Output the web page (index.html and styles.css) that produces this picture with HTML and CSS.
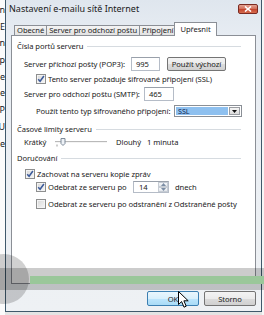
FILE: index.html
```html
<!DOCTYPE html>
<html lang="cs">
<head>
<meta charset="utf-8">
<title>Nastavení e-mailu sítě Internet</title>
<link rel="stylesheet" href="styles.css">
</head>
<body>
<div class="desk">
  <div class="bgstrip">
    <div class="bgline"><span>Jmén</span></div>
    <div class="bgline"><span>E</span></div>
    <div class="bgline"><span>Jmén</span></div>
    <div class="bgline"><span>Typ</span></div>
    <div class="bgline"><span>Se</span></div>
    <div class="bgline"><span>Se</span></div>
    <div class="bgline"><span>P</span></div>
    <div class="bgline"><span>U</span></div>
    <div class="bgline"><span>de</span></div>
  </div>
  <div class="window">
    <div class="titlebar">
      <span class="title">Nastavení e-mailu sítě Internet</span>
      <span class="close"><svg width="8" height="6" viewBox="0 0 8 6"><path d="M1 0.5 L7 5.5 M7 0.5 L1 5.5" stroke="#fff" stroke-width="1.6"/></svg></span>
    </div>
    <div class="client">
      <div class="tabs">
        <div class="tab">Obecné</div>
        <div class="tab">Server pro odchozí poštu</div>
        <div class="tab">Připojení</div>
        <div class="tab sel">Upřesnit</div>
      </div>
      <div class="panel">
        <div class="group r1">Čísla portů serveru</div>
        <div class="row r2">
          <span class="ind1 lbl-pop">Server příchozí pošty (POP3):</span>
          <span class="input w-pop">995</span>
          <span class="btn w-def">Použít výchozí</span>
        </div>
        <div class="row r3">
          <span class="cb ind2"><svg width="8" height="8" viewBox="0 0 8 8"><path d="M1.2 4.2 L3.1 6.3 L6.9 1" fill="none" stroke="#3b5a9a" stroke-width="1.5"/></svg></span>
          <span class="cbtext">Tento server požaduje šifrované připojení (SSL)</span>
        </div>
        <div class="row r4">
          <span class="ind1 lbl-smtp">Server pro odchozí poštu (SMTP):</span>
          <span class="input w-smtp">465</span>
        </div>
        <div class="row r5">
          <span class="ind2 lbl-enc">Použít tento typ šifrovaného připojení:</span>
          <span class="select">
            <span class="selval">SSL</span>
            <span class="dd"><svg width="5" height="3" viewBox="0 0 5 3"><path d="M0 0 H5 L2.5 3 Z" fill="#111"/></svg></span>
          </span>
        </div>
        <div class="group r6">Časové limity serveru</div>
        <div class="row r7">
          <span class="ind1 lbl-short">Krátký</span>
          <span class="slider"><svg width="52" height="10" viewBox="0 0 52 10"><path d="M0 4.5 H52" stroke="#b9b9b9" stroke-width="1"/><path d="M0 5.5 H52" stroke="#f4f4f4" stroke-width="1"/><path d="M2 7.5 V9.5" stroke="#9a9a9a"/><path d="M6 1.5 H10 V6.5 L8 8.5 L6 6.5 Z" fill="#eef2f7" stroke="#7d8a99"/></svg></span>
          <span class="lbl-long">Dlouhý</span>
          <span>1 minuta</span>
        </div>
        <div class="group r8">Doručování</div>
        <div class="row r9">
          <span class="cb ind3"><svg width="8" height="8" viewBox="0 0 8 8"><path d="M1.2 4.2 L3.1 6.3 L6.9 1" fill="none" stroke="#3b5a9a" stroke-width="1.5"/></svg></span>
          <span class="cbtext">Zachovat na serveru kopie zpráv</span>
        </div>
        <div class="row r10">
          <span class="cb ind2"><svg width="8" height="8" viewBox="0 0 8 8"><path d="M1.2 4.2 L3.1 6.3 L6.9 1" fill="none" stroke="#3b5a9a" stroke-width="1.5"/></svg></span>
          <span class="cbtext lbl-del">Odebrat ze serveru po</span>
          <span class="spin">
            <span class="spinval">14</span>
            <span class="spinbtns">
              <span class="sb"><svg width="5" height="3" viewBox="0 0 5 3"><path d="M0 3 H5 L2.5 0 Z" fill="#7c8ea5"/></svg></span>
              <span class="sb"><svg width="5" height="3" viewBox="0 0 5 3"><path d="M0 0 H5 L2.5 3 Z" fill="#7c8ea5"/></svg></span>
            </span>
          </span>
          <span class="days">dnech</span>
        </div>
        <div class="row r11">
          <span class="cb ind2"></span>
          <span class="cbtext">Odebrat ze serveru po odstranění z Odstraněné pošty</span>
        </div>
      </div>
      <div class="actions">
        <span class="btn ok">OK</span>
        <span class="btn cancel">Storno</span>
      </div>
    </div>
  </div>
  <div class="rightstrip"></div>
</div>
<div class="bar"><div class="progress"></div></div>
<div class="circle"></div>
<svg class="cursor" width="12" height="18" viewBox="0 0 12 18"><path d="M0.5 0.5 V13.5 L3.6 10.6 L6 16.2 L8.2 15.2 L5.9 9.8 L10.2 9.8 Z" fill="#fff" stroke="#000" stroke-width="1" stroke-linejoin="round"/></svg>
</body>
</html>
```

FILE: styles.css
```css
* { box-sizing: border-box; }
html, body { margin: 0; padding: 0; }
body {
  width: 264px;
  height: 315px;
  overflow: hidden;
  position: relative;
  background: #e4e4e4;
  font-family: "Noto Sans", "Open Sans", sans-serif;
  font-size: 7.6px;
  letter-spacing: -0.05px;
  color: #222;
}
.desk { display: flex; height: 315px; }

.bgstrip {
  width: 5px;
  flex: none;
  background: #fbfbfb;
  overflow: hidden;
  padding-top: 4px;
  display: flex;
  flex-direction: column;
}
.bgline {
  height: 16.7px;
  display: flex;
  justify-content: flex-end;
  white-space: nowrap;
  font-size: 9px;
  line-height: 12px;
  color: #222;
}
.rightstrip { width: 2px; flex: none; background: #f6f6f6; }

.window {
  width: 257px;
  height: 312px;
  flex: none;
  border: 1px solid #40596b;
  border-top: none;
  background: linear-gradient(#dfe6ee, #e8edf3 40px, #eef1f4);
  padding: 0 5px;
  display: flex;
  flex-direction: column;
}
.titlebar {
  height: 22px;
  margin: 0 -5px;
  padding: 0 3px 0 3px;
  display: flex;
  justify-content: space-between;
  align-items: flex-start;
}
.title {
  margin-top: 3px;
  font-size: 9px;
  letter-spacing: 0;
  line-height: 12px;
  color: #1a1a1a;
}
.close {
  margin-top: 4px;
  width: 20px;
  height: 10px;
  border: 1px solid #7a2a22;
  border-radius: 2px;
  background: linear-gradient(#e3a393, #d16a56 50%, #c2412b 50%, #d66c4e);
  display: flex;
  align-items: center;
  justify-content: center;
}

.client { display: flex; flex-direction: column; flex: 1; }
.tabs {
  height: 13px;
  padding-left: 4px;
  display: flex;
  align-items: flex-end;
}
.tab {
  height: 10px;
  margin-left: -1px;
  padding: 0 2px;
  border: 1px solid #8b8f96;
  border-bottom: none;
  background: linear-gradient(#f4f4f4, #e2e2e2);
  font-size: 7.6px;
  line-height: 9px;
  white-space: nowrap;
}
.tab.sel {
  height: 14px;
  margin: 0 0 -1px -2px;
  padding: 2px 5px 0;
  background: #fff;
  position: relative;
  z-index: 1;
}

.panel {
  height: 249px;
  border: 1px solid #8b8f96;
  background: #fff;
  padding: 4px 14px 0 5px;
  display: flex;
  flex-direction: column;
}
.row, .group {
  height: 12px;
  display: flex;
  align-items: center;
  white-space: nowrap;
  flex: none;
}
.group { gap: 4px; }
.group::after {
  content: "";
  flex: 1;
  height: 1px;
  background: #d6dbe0;
}
.r2 { height: 14px; margin-top: 5px; }
.r3 { margin-top: 2px; }
.r4 { height: 14px; margin-top: 2px; }
.r5 { margin-top: 4px; }
.r6 { margin-top: 6px; }
.r7 { margin-top: 1px; }
.r8 { margin-top: 4px; }
.r9 { margin-top: 4px; }
.r10 { margin-top: 1px; }
.r11 { margin-top: 5px; }

.ind1 { margin-left: 7px; }
.ind2 { margin-left: 19px; }
.ind3 { margin-left: 8px; }
.lbl-pop { width: 107px; flex: none; }
.lbl-smtp { width: 120px; flex: none; }
.lbl-enc { width: 138px; flex: none; }
.lbl-short { width: 31px; flex: none; }
.lbl-long { width: 31px; flex: none; margin-left: 9px; }
.lbl-del { width: 85px; flex: none; }

.input {
  height: 14px;
  border: 1px solid #b5bcc7;
  border-top-color: #99a0aa;
  background: #fff;
  padding-left: 4px;
  line-height: 12px;
  flex: none;
}
.w-pop { width: 29px; }
.w-smtp { width: 30px; }

.btn {
  height: 14px;
  border: 1px solid #747474;
  border-radius: 2px;
  background: linear-gradient(#f3f3f3, #ebebeb 50%, #dcdcdc 50%, #d0d0d0);
  display: flex;
  align-items: center;
  justify-content: center;
  flex: none;
}
.w-def { width: 59px; margin-left: 7px; }

.cb {
  width: 10px;
  height: 10px;
  flex: none;
  border: 1px solid #8e8f8f;
  background: linear-gradient(135deg, #d8d8d8, #f6f6f6);
  box-shadow: inset 0 0 0 1px #f4f4f4;
  display: flex;
  align-items: center;
  justify-content: center;
}
.cbtext { margin-left: 2px; }

.select {
  width: 68px;
  height: 12px;
  flex: none;
  border: 1px solid #8a8f96;
  background: #fff;
  display: flex;
  padding: 1px;
}
.selval {
  flex: 1;
  background: #8ec0ef;
  color: #10264f;
  line-height: 8px;
  padding-left: 2px;
  font-size: 7.2px;
}
.dd {
  width: 11px;
  margin-left: 1px;
  border: 1px solid #9a9da2;
  background: linear-gradient(#f5f5f5, #dcdcdc);
  display: flex;
  align-items: center;
  justify-content: center;
}

.slider { width: 52px; height: 10px; flex: none; display: flex; }

.spin {
  width: 36px;
  height: 12px;
  flex: none;
  border: 1px solid #b5bcc7;
  border-top-color: #99a0aa;
  background: #fff;
  display: flex;
}
.spinval { flex: 1; padding-left: 5px; line-height: 10px; }
.spinbtns { width: 10px; display: flex; flex-direction: column; margin: 0; }
.sb {
  flex: 1;
  border: 1px solid #c6ccd4;
  background: linear-gradient(#f6f8fa, #e3e7ec);
  display: flex;
  align-items: center;
  justify-content: center;
}
.days { margin-left: 6px; }

.actions {
  display: flex;
  justify-content: flex-end;
  gap: 5px;
  margin-top: 7px;
}
.actions .btn { width: 52px; height: 15px; }
.btn.ok {
  border-color: #3c7fb1;
  background: linear-gradient(#eaf6fd, #d9f0fc 50%, #bee6fd 50%, #a9dbf6);
}

.bar {
  position: absolute;
  left: 0;
  top: 268px;
  width: 264px;
  height: 22px;
  background: rgba(0, 0, 0, 0.2);
  padding-top: 8px;
}
.progress {
  margin-left: 30px;
  height: 8px;
  background: #9ac79a;
}
.circle {
  position: absolute;
  left: -21px;
  top: 254px;
  width: 50px;
  height: 50px;
  border-radius: 50%;
  background: rgba(0, 0, 0, 0.18);
}
.cursor {
  position: absolute;
  left: 178px;
  top: 291px;
}
```
